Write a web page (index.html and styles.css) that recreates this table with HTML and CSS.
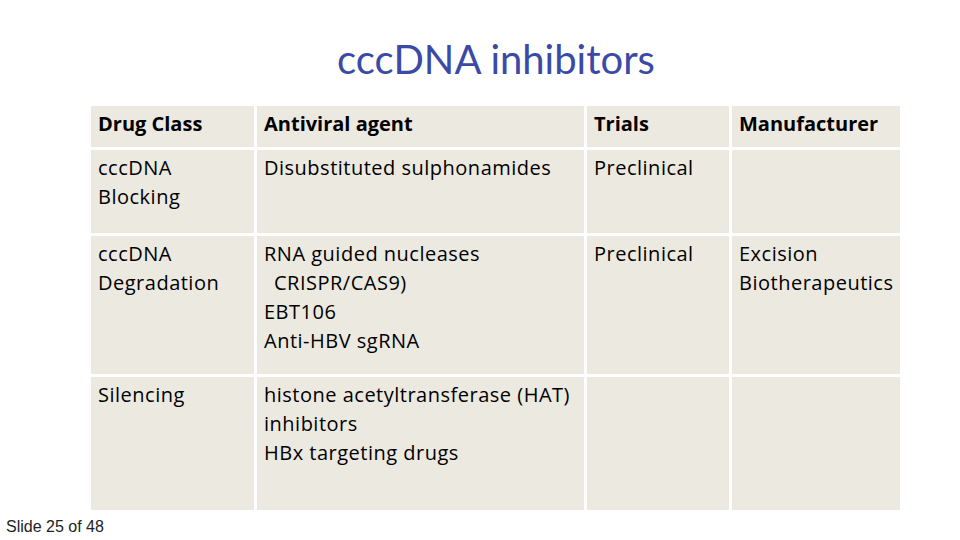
FILE: index.html
```html
<!DOCTYPE html>
<html lang="en">
<head>
<meta charset="utf-8">
<title>cccDNA inhibitors</title>
<link rel="stylesheet" href="styles.css">
</head>
<body>
<div class="slide">
  <h1 class="title">cccDNA inhibitors</h1>
  <div class="grid">
    <div class="cell head">Drug Class</div>
    <div class="cell head">Antiviral agent</div>
    <div class="cell head">Trials</div>
    <div class="cell head">Manufacturer</div>

    <div class="cell">cccDNA<br>Blocking</div>
    <div class="cell">Disubstituted sulphonamides</div>
    <div class="cell">Preclinical</div>
    <div class="cell"></div>

    <div class="cell">cccDNA<br>Degradation</div>
    <div class="cell">RNA guided nucleases<br><span class="indent">CRISPR/CAS9)</span><br>EBT106<br>Anti-HBV sgRNA</div>
    <div class="cell">Preclinical</div>
    <div class="cell">Excision<br>Biotherapeutics</div>

    <div class="cell">Silencing</div>
    <div class="cell">histone acetyltransferase (HAT)<br>inhibitors<br>HBx targeting drugs</div>
    <div class="cell"></div>
    <div class="cell"></div>
  </div>
  <div class="footer">Slide 25 of 48</div>
</div>
</body>
</html>
```
FILE: styles.css
```css
html, body {
  margin: 0;
  padding: 0;
  background: #ffffff;
}

.slide {
  width: 960px;
  height: 540px;
  overflow: hidden;
  box-sizing: border-box;
  padding-top: 35px;
  font-family: "Open Sans", "Noto Sans", sans-serif;
  color: #000000;
}

.title {
  margin: 0;
  padding-left: 32px;
  height: 48px;
  font-family: Lato, "Open Sans", sans-serif;
  font-size: 40px;
  line-height: 48px;
  font-weight: 400;
  text-align: center;
  color: #3a4aa6;
}

.grid {
  margin: 23px 0 0 91px;
  display: grid;
  grid-template-columns: 163px 327px 142px 168px;
  grid-template-rows: 41px 83px 138px 133px;
  gap: 3px;
}

.cell {
  background: #ece9e1;
  padding: 3px 7px 4px 7px;
  font-size: 20px;
  line-height: 29px;
  letter-spacing: 0.5px;
  white-space: nowrap;
  font-variant-ligatures: none;
}

.head {
  font-weight: 700;
  letter-spacing: 0;
}

.indent {
  padding-left: 10px;
}

.footer {
  margin-top: 8px;
  padding-left: 6px;
  font-family: "Liberation Sans", Arial, sans-serif;
  font-size: 16px;
  line-height: 18px;
  color: #222222;
}
```
